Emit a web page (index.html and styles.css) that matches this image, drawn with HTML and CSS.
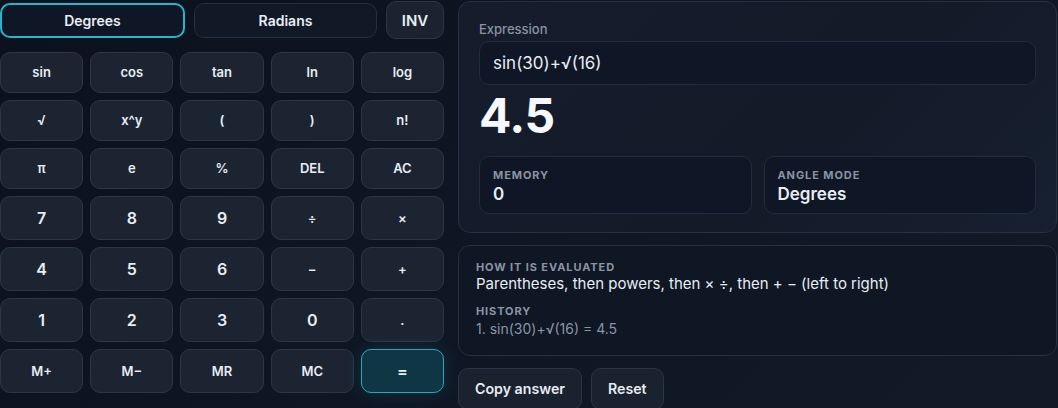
FILE: index.html
```html
<!DOCTYPE html>
<html lang="en">
<head>
  <meta charset="UTF-8" />
  <meta name="viewport" content="width=device-width, initial-scale=1.0"/>
  <title>Scientific Calculator</title>
  <link rel="stylesheet" href="styles.css">
</head>
<body>

<div class="layout">
  <div class="pad">
    <div class="modes">
      <button class="mode active">Degrees</button>
      <button class="mode">Radians</button>
      <button class="inv">INV</button>
    </div>

    <div class="keys">
      <button class="key">sin</button>
      <button class="key">cos</button>
      <button class="key">tan</button>
      <button class="key">ln</button>
      <button class="key">log</button>

      <button class="key">√</button>
      <button class="key">x^y</button>
      <button class="key">(</button>
      <button class="key">)</button>
      <button class="key">n!</button>

      <button class="key">π</button>
      <button class="key">e</button>
      <button class="key">%</button>
      <button class="key">DEL</button>
      <button class="key">AC</button>

      <button class="key num">7</button>
      <button class="key num">8</button>
      <button class="key num">9</button>
      <button class="key">÷</button>
      <button class="key">×</button>

      <button class="key num">4</button>
      <button class="key num">5</button>
      <button class="key num">6</button>
      <button class="key">−</button>
      <button class="key">+</button>

      <button class="key num">1</button>
      <button class="key num">2</button>
      <button class="key num">3</button>
      <button class="key num">0</button>
      <button class="key">.</button>

      <button class="key">M+</button>
      <button class="key">M−</button>
      <button class="key">MR</button>
      <button class="key">MC</button>
      <button class="key equals">=</button>
    </div>
  </div>

  <div class="side">
    <div class="card display">
      <div class="label">Expression</div>
      <div class="expr">sin(30)+√(16)</div>
      <div class="result">4.5</div>
      <div class="stats">
        <div class="stat">
          <div class="caps">Memory</div>
          <div class="value">0</div>
        </div>
        <div class="stat">
          <div class="caps">Angle mode</div>
          <div class="value">Degrees</div>
        </div>
      </div>
    </div>

    <div class="card info">
      <div class="caps">How it is evaluated</div>
      <p class="rule">Parentheses, then powers, then × ÷, then + − (left to right)</p>
      <div class="caps history-title">History</div>
      <ol class="history">
        <li>1. sin(30)+√(16) = 4.5</li>
      </ol>
    </div>

    <div class="actions">
      <button class="action">Copy answer</button>
      <button class="action">Reset</button>
    </div>
  </div>
</div>

</body>
</html>
```

FILE: styles.css
```css
body {
  margin: 0;
  font-family: 'Inter', 'Noto Sans', sans-serif;
  background: linear-gradient(135deg, #0b111d 0%, #0f1724 55%, #121a28 100%);
  color: #e8edf3;
  height: 408px;
  overflow: hidden;
}
button {
  font-family: inherit;
  color: #e8edf3;
  cursor: pointer;
}
.layout {
  display: grid;
  grid-template-columns: 444px 599px;
  column-gap: 14px;
  padding-top: 1px;
}

/* left: keypad */
.modes {
  display: flex;
  align-items: center;
  gap: 9px;
  margin-bottom: 13px;
}
.mode {
  flex: 1;
  height: 35px;
  font-size: 14px;
  font-weight: 600;
  background: #111826;
  border: 1px solid #252f3f;
  border-radius: 10px;
  margin-top: 1px;
}
.mode.active {
  border: 2px solid #25b6cf;
  background: #0f1726;
}
.inv {
  width: 58px;
  height: 38px;
  font-size: 15px;
  font-weight: 600;
  background: #1b2331;
  border: 1px solid #2c3646;
  border-radius: 10px;
}
.keys {
  display: grid;
  grid-template-columns: repeat(5, 1fr);
  gap: 7px;
}
.key {
  padding: 11px 0;
  font-size: 13px;
  line-height: 17px;
  font-weight: 600;
  background: #1c2432;
  border: 1px solid #2c3647;
  border-radius: 10px;
}
.key.num {
  font-size: 16px;
  line-height: 20px;
}
.key.equals {
  font-size: 16px;
  line-height: 20px;
  background: #0f3644;
  border: 1.5px solid #2aa7ba;
  box-shadow: 0 0 18px rgba(34, 170, 200, 0.18);
}

/* right: display and info */
.card {
  background: #141c2a;
  border: 1px solid #253041;
  border-radius: 12px;
}
.display {
  padding: 18px 20px 18px;
  background: linear-gradient(135deg, #151d2c, #131b29 60%, #172030);
}
.label {
  font-size: 13px;
  line-height: 18px;
  font-weight: 500;
  color: #8a94a4;
  margin-bottom: 3px;
}
.expr {
  font-size: 17px;
  line-height: 24px;
  padding: 9px 13px;
  background: #0f1625;
  border: 1px solid #222c3d;
  border-radius: 10px;
}
.result {
  font-size: 48px;
  line-height: 53px;
  font-weight: 700;
  color: #f6f8fb;
  margin: 4px 0 14px;
  letter-spacing: -0.5px;
}
.stats {
  display: grid;
  grid-template-columns: 1fr 1fr;
  gap: 12px;
}
.stat {
  padding: 11px 13px 8px;
  background: #0f1625;
  border: 1px solid #222c3d;
  border-radius: 10px;
}
.caps {
  font-size: 11px;
  line-height: 14px;
  font-weight: 700;
  letter-spacing: 0.9px;
  text-transform: uppercase;
  color: #8a94a4;
}
.value {
  font-size: 17px;
  line-height: 22px;
  font-weight: 600;
  margin-top: 1px;
}
.info {
  margin-top: 12px;
  padding: 14px 17px 17px;
  background: #0f1624;
}
.rule {
  margin: 0 0 10px;
  font-size: 15px;
  line-height: 20px;
}
.history-title {
  margin-bottom: 2px;
}
.history {
  margin: 0;
  padding: 0;
  list-style: none;
  font-size: 14px;
  line-height: 18px;
  color: #8a94a4;
}
.actions {
  display: flex;
  gap: 9px;
  margin-top: 12px;
}
.action {
  padding: 10px 16px;
  font-size: 14.2px;
  line-height: 20px;
  font-weight: 600;
  background: #1a2230;
  border: 1px solid #2c3646;
  border-radius: 10px;
}
```
